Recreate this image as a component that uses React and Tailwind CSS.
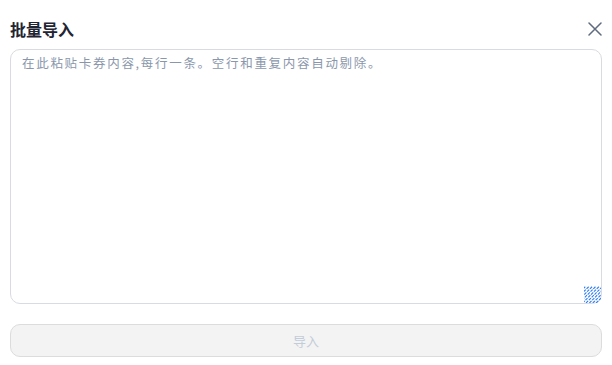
import React, { useState } from 'react';

const cjk = { fontFamily: '"Noto Sans CJK SC", "Noto Sans", sans-serif' };

function ResizeGrip() {
  // striped grip shown at the textarea's corner
  const lines = [];
  for (let i = -15; i <= 15; i += 3.4) {
    lines.push(<line key={i} x1={i} y1={17} x2={i + 17} y2={0} />);
  }
  return (
    <svg
      className="pointer-events-none absolute bottom-[1px] right-[1px]"
      width="17"
      height="17"
      viewBox="0 0 17 17"
    >
      <g stroke="#2f7cf6" strokeWidth="1.1" strokeDasharray="3 1">
        {lines}
      </g>
    </svg>
  );
}

export default function App() {
  const [text, setText] = useState('');

  return (
    <div className="h-[365px] w-[612px] bg-white" style={cjk}>
      <div className="flex items-center justify-between pl-[10px] pr-[7px] pt-[17px]">
        <h1 className="text-[16px] font-bold leading-[24px] text-[#1f2533]">批量导入</h1>
        <button className="flex h-[20px] w-[20px] items-center justify-center text-[#5f6b7f]">
          <svg width="14" height="14" viewBox="0 0 14 14" fill="none" stroke="currentColor" strokeWidth="1.5" strokeLinecap="round">
            <path d="M1 1L13 13M13 1L1 13" />
          </svg>
        </button>
      </div>

      <div className="px-[10px] pt-[8px]">
        <div className="relative">
          <textarea
            value={text}
            onChange={(e) => setText(e.target.value)}
            placeholder="在此粘贴卡券内容,每行一条。空行和重复内容自动剔除。"
            className="block h-[255px] w-full resize-none rounded-[10px] border border-[#d9dbe0] px-[11px] py-[3px] text-[12.5px] leading-[20px] tracking-[1.7px] text-[#333] outline-none placeholder:text-[#8a97ab]"
            style={cjk}
          />
          <ResizeGrip />
        </div>

        <button
          disabled
          className="mt-[20px] flex h-[33px] w-full items-center justify-center rounded-[10px] border border-[#dcdcdc] bg-[#f3f3f3] text-[13px] text-[#c3ccd9]"
        >
          导入
        </button>
      </div>
    </div>
  );
}
